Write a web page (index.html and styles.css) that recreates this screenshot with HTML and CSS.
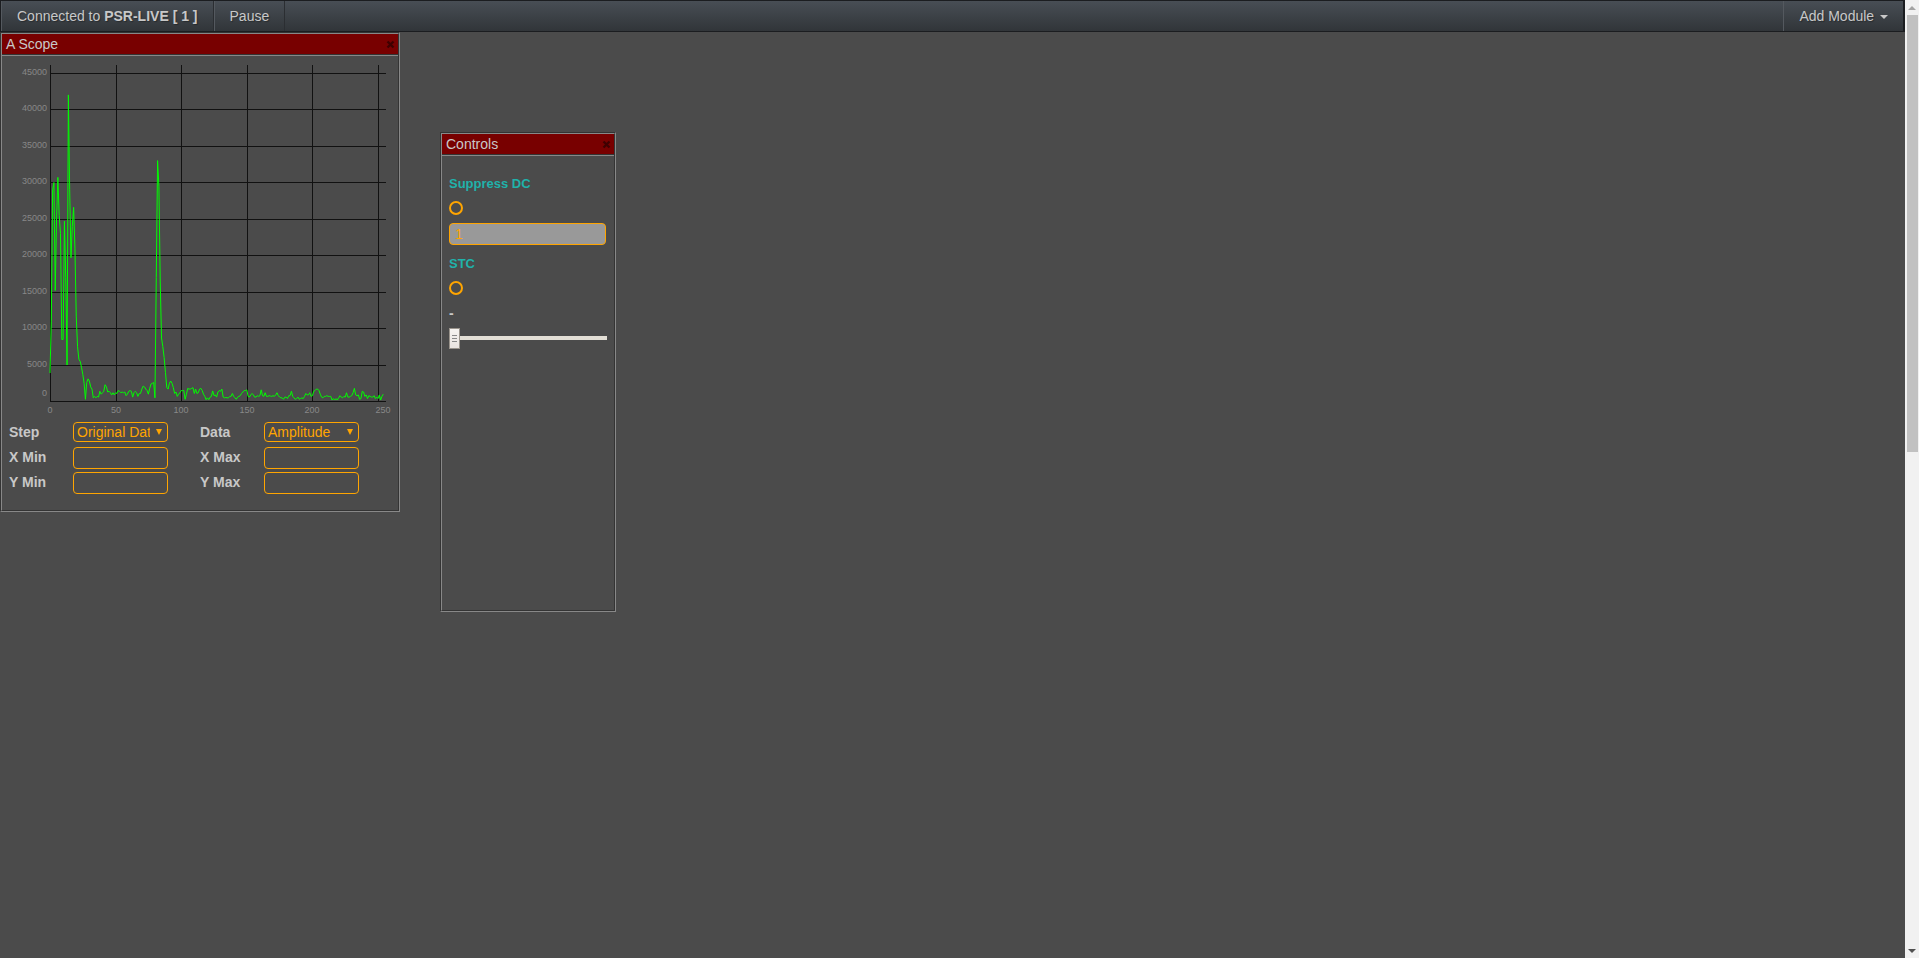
FILE: index.html
```html
<!DOCTYPE html>
<html lang="en">
<head>
    <meta charset="UTF-8">
    <meta name="viewport" content="width=device-width, initial-scale=1.0">
    <title>PSR-LIVE</title>
    <link rel="stylesheet" href="styles.css">
</head>
<body>
    <div class="page">
        <nav class="navbar">
            <a class="nav-item" href="#">Connected to <b>PSR-LIVE [ 1 ]</b></a>
            <a class="nav-item" href="#">Pause</a>
            <a class="nav-item nav-right" href="#">Add Module <span class="caret"></span></a>
        </nav>

        <main class="desktop">
            <!-- A Scope -->
            <section class="module scope">
                <header class="module-header">
                    <span>A Scope</span>
                    <button class="close" aria-label="Close A Scope">
                        <svg width="9" height="9" viewBox="0 0 9 9"><path d="M1.5 1.5L7.5 7.5M7.5 1.5L1.5 7.5"/></svg>
                    </button>
                </header>
                <svg id="chart" class="chart" width="396" height="366" viewBox="0 0 396 366"></svg>
                <form class="fields">
                    <label for="step">Step</label>
                    <div class="select">
                        <select id="step"><option>Original Data</option></select>
                    </div>
                    <label for="data">Data</label>
                    <div class="select">
                        <select id="data"><option>Amplitude</option></select>
                    </div>
                    <label for="x-min">X Min</label>
                    <input type="text" id="x-min">
                    <label for="x-max">X Max</label>
                    <input type="text" id="x-max">
                    <label for="y-min">Y Min</label>
                    <input type="text" id="y-min">
                    <label for="y-max">Y Max</label>
                    <input type="text" id="y-max">
                </form>
            </section>

            <!-- Controls -->
            <section class="module controls">
                <header class="module-header">
                    <span>Controls</span>
                    <button class="close" aria-label="Close Controls">
                        <svg width="9" height="9" viewBox="0 0 9 9"><path d="M1.5 1.5L7.5 7.5M7.5 1.5L1.5 7.5"/></svg>
                    </button>
                </header>
                <form class="control-list">
                    <label class="control-name" for="suppress">Suppress DC</label>
                    <input type="radio" id="suppress">
                    <input type="text" class="control-value" value="1" aria-label="Suppress DC value" disabled>
                    <label class="control-name" for="stc">STC</label>
                    <input type="radio" id="stc">
                    <label class="range-value" for="stc-range">-</label>
                    <input type="range" id="stc-range" min="0" max="100" value="0">
                </form>
            </section>
        </main>
    </div>

    <div class="scrollbar">
        <svg width="14" height="15" viewBox="0 0 14 15"><path fill="#a3a3a3" d="M3 10h8L7 6z"/></svg>
        <div class="scroll-thumb"></div>
        <svg class="scroll-down" width="14" height="14" viewBox="0 0 14 14"><path fill="#505050" d="M3 5h8L7 9z"/></svg>
    </div>

    <script src="scope.js"></script>
</body>
</html>
```
FILE: styles.css
```css
* {
    box-sizing: border-box;
}
body {
    margin: 0;
    min-height: 100vh;
    display: flex;
    background-color: #4b4b4b;
    color: #c8c8c8;
    font-family: "Liberation Sans", Arial, sans-serif;
    font-size: 14px;
    line-height: 20px;
}
.page {
    flex: 1;
    display: flex;
    flex-direction: column;
}

/* Navbar */
.navbar {
    display: flex;
    height: 32px;
    border: 1px solid #1b1d20;
    background-image: linear-gradient(#484e55, #3a3f44 60%, #313539);
}
.nav-item {
    padding: 5px 15px;
    border-left: 1px solid #54595f;
    border-right: 1px solid #2b2e32;
    color: #c8c8c8;
    text-decoration: none;
    text-shadow: 1px 1px 1px rgba(0, 0, 0, 0.3);
}
.nav-right {
    margin-left: auto;
    border-right-color: #1b1d20;
}
.caret {
    display: inline-block;
    margin-left: 2px;
    vertical-align: middle;
    border-top: 4px solid #c8c8c8;
    border-left: 4px solid transparent;
    border-right: 4px solid transparent;
}

/* Modules */
.desktop {
    position: relative;
    flex: 1;
}
.module {
    position: absolute;
    height: 480px;
    border: 2px groove #888;
}
.scope {
    top: 0;
    left: 0;
    width: 400px;
}
.controls {
    top: 100px;
    left: 440px;
    width: 176px;
}
.module-header {
    display: flex;
    justify-content: space-between;
    align-items: center;
    height: 22px;
    padding: 0 3px 0 4px;
    border-bottom: 2px groove #888;
    background-color: #780000;
}
.close {
    display: flex;
    padding: 0;
    border: none;
    background: none;
    cursor: pointer;
}
.close path {
    stroke: #3f0000;
    stroke-width: 2.4;
}
.chart {
    display: block;
}
.grid {
    stroke: #111;
}
.trace {
    fill: none;
    stroke: #0f0;
}
.chart text {
    fill: #888;
    font-size: 9px;
}

/* Scope fields */
.fields {
    display: grid;
    grid-template-columns: 64px 127px 64px 95px;
    grid-auto-rows: 22px;
    row-gap: 3px;
    padding-left: 7px;
}
.fields label {
    font-weight: bold;
}
.select {
    position: relative;
    width: 95px;
    height: 20px;
}
.select::after {
    content: "";
    position: absolute;
    top: 7px;
    right: 6px;
    border-top: 6px solid orange;
    border-left: 3px solid transparent;
    border-right: 3px solid transparent;
    pointer-events: none;
}
select,
input[type="text"] {
    width: 95px;
    height: 22px;
    padding: 0 5px;
    border: 1px solid orange;
    border-radius: 4px;
    background-color: transparent;
    color: orange;
    font: inherit;
}
select {
    display: block;
    height: 20px;
    padding: 0 17px 0 3px;
    line-height: 18px;
    appearance: none;
}

/* Controls */
.control-list {
    display: flex;
    flex-direction: column;
    align-items: flex-start;
    padding: 18px 7px;
}
.control-name {
    margin-bottom: 7px;
    color: lightseagreen;
    font-size: 13px;
    font-weight: bold;
}
input[type="radio"] {
    width: 14px;
    height: 14px;
    margin: 0 0 8px;
    border: 2px solid orange;
    border-radius: 50%;
    appearance: none;
}
input.control-value {
    width: 157px;
    margin-bottom: 9px;
    background-color: #999;
}
.range-value {
    font-weight: bold;
}
input[type="range"] {
    width: 158px;
    height: 22px;
    margin: 4px 0;
    background: none;
    appearance: none;
}
input[type="range"]::-webkit-slider-runnable-track {
    height: 4px;
    background-color: #e3dfd6;
}
input[type="range"]::-webkit-slider-thumb {
    width: 11px;
    height: 21px;
    margin-top: -8px;
    border: 1px solid #9a948c;
    background:
        linear-gradient(#888 1px, transparent 1px, transparent 3px, #888 3px, #888 4px, transparent 4px, transparent 6px, #888 6px) center / 5px 7px no-repeat,
        linear-gradient(#f6f3f0, #e9e4e0);
    appearance: none;
}

/* Scrollbar */
.scrollbar {
    display: flex;
    flex-direction: column;
    width: 14px;
    background-color: #f1f1f1;
}
.scroll-thumb {
    height: 45.6%;
    margin: 0 1px 0 2px;
    background-color: #c1c1c1;
}
.scroll-down {
    margin-top: auto;
}
```
FILE: scope.js
```js
// Amplitude for each range bin
const samples = [
    3900, 11000, 29000, 30000, 15200, 25000, 30700, 25500, 23000, 8500,
    8500, 24700, 17000, 5000, 42000, 29000, 19700, 24000, 26600, 21000,
    11700, 7500, 5800, 5500, 4700, 3700, 2500, 300, 2600, 3100,
    2800, 2000, 1700, 500, 700, 500, 700, 600, 1400, 1000,
    1200, 1400, 2300, 2000, 1300, 1400, 1200, 900, 1200, 900,
    1200, 1100, 1500, 1400, 1200, 1300, 1200, 1300, 800, 1000,
    1400, 1500, 1400, 600, 1200, 1400, 1200, 700, 1100, 1100,
    1700, 2100, 2000, 1700, 1500, 1000, 1800, 2400, 2500, 2600,
    500, 17000, 33000, 29500, 16500, 8700, 7500, 6000, 4000, 1900,
    1700, 2500, 2800, 2500, 1900, 1100, 1300, 700, 1000, 1200,
    1500, 1500, 1500, 300, 1000, 1800, 1700, 1700, 1800, 1900,
    1100, 1700, 1100, 1200, 1700, 1800, 1500, 1000, 700, 250,
    500, 250, 600, 700, 1450, 800, 900, 600, 1300, 1500,
    1400, 1700, 600, 500, 550, 500, 500, 700, 700, 1100,
    700, 500, 300, 600, 700, 800, 1100, 1300, 1500, 1500,
    1600, 700, 600, 900, 1100, 900, 600, 600, 800, 700,
    800, 1600, 800, 700, 1200, 700, 700, 800, 750, 700,
    800, 700, 900, 1200, 800, 600, 500, 500, 300, 600,
    600, 400, 800, 800, 1400, 700, 500, 300, 400, 600,
    300, 400, 500, 400, 700, 1100, 900, 900, 1200, 700,
    800, 1400, 1500, 1700, 1700, 1500, 1000, 600, 500, 700,
    700, 800, 700, 700, 700, 200, 400, 200, 400, 200,
    500, 800, 600, 500, 700, 600, 1200, 600, 600, 700,
    800, 1200, 1800, 900, 800, 900, 300, 400, 1400, 1300,
    700, 900, 400, 800, 700, 600, 600, 800, 400, 600,
    400, 900, 200, 700, 1000
];

const left = 48;
const right = 384;
const plotTop = 9;
const bottom = 345;
const chart = document.getElementById('chart');

function toX(bin) {
    return left + bin * 1.312;
}

function toY(amplitude) {
    return bottom - amplitude * 0.0073;
}

function line(x1, y1, x2, y2) {
    return `<line class="grid" x1="${x1}" y1="${y1}" x2="${x2}" y2="${y2}"/>`;
}

function text(x, y, anchor, value) {
    return `<text x="${x}" y="${y}" text-anchor="${anchor}">${value}</text>`;
}

let svg = '';

for (let bin = 0; bin <= 250; bin += 50) {
    const x = Math.round(toX(bin));
    svg += line(x + 0.5, plotTop, x + 0.5, bottom);
    // The last label sits a little further right
    svg += text(bin === 250 ? x + 5 : x, 357, 'middle', bin);
}

for (let amp = 0; amp <= 45000; amp += 5000) {
    const y = Math.round(toY(amp)) + 0.5;
    svg += line(left, y, right, y);
    svg += text(45, amp === 0 ? 340 : Math.round(toY(amp)) + 2, 'end', amp);
}

const points = samples.map((amp, bin) => `${toX(bin)},${toY(amp) + 0.5}`).join(' ');
svg += `<polyline class="trace" points="${points}"/>`;

chart.innerHTML = svg;
```
